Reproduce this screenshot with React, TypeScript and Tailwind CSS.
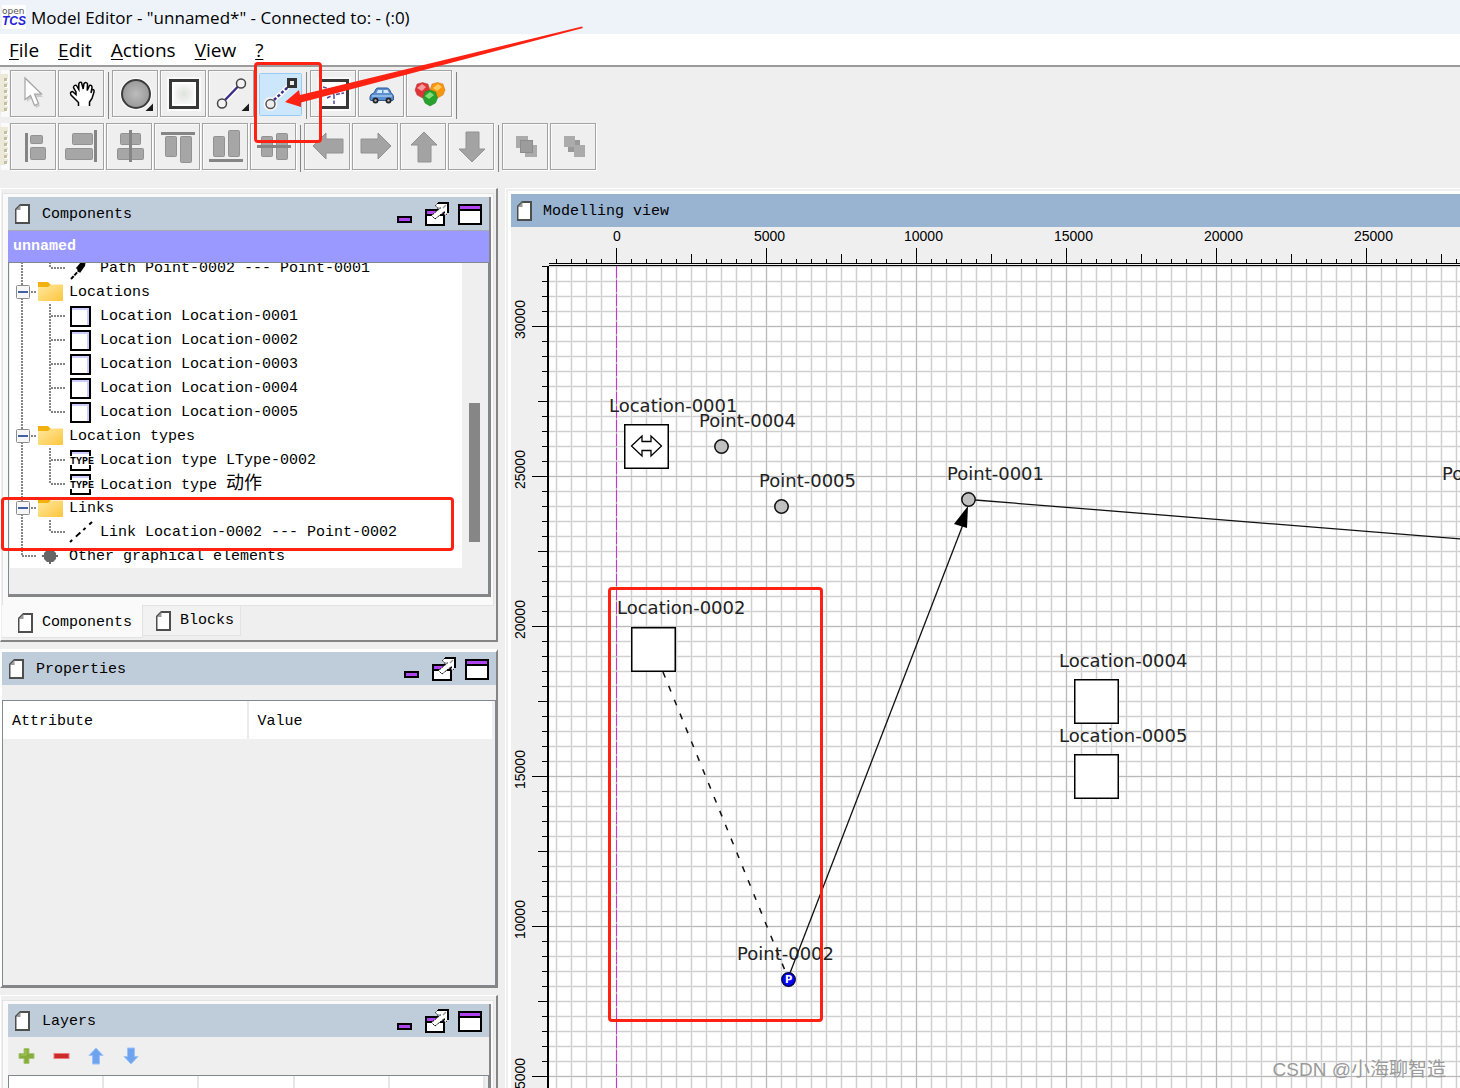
import React from 'react';

const RED = '#ff2213';

/* ---------- toolbar ---------- */

const ToolButton = ({ label, active, children }: { label: string; active?: boolean; children: React.ReactNode }) => (
  <button
    type="button"
    aria-label={label}
    className={
      active
        ? 'h-[47px] w-[46px] shrink-0'
        : 'h-[47px] w-[46px] shrink-0 border border-[#a3a3a3] bg-[#efefef] shadow-[1px_1px_0_#ffffff,inset_1px_1px_0_#fafafa]'
    }
  >
    <svg viewBox="0 0 46 47" width="46" height="47" className={active ? 'block' : '-m-px block'}>
      {children}
    </svg>
  </button>
);

const Grip = () => (
  <svg width="10" height="47" className="shrink-0">
    <rect x="1" y="0" width="8" height="47" fill="#fafafa" />
    <rect x="0" y="4" width="8" height="38" fill="#ece9d8" />
    {[8, 14, 20, 26, 32, 38].map((y) => (
      <g key={y}>
        <rect x="5" y={y + 1} width="3" height="3" fill="#fff" />
        <rect x="4" y={y} width="3" height="3" fill="#c4bfa4" />
      </g>
    ))}
  </svg>
);

const Separator = () => <div className="mr-px ml-0.5 h-[47px] w-px shrink-0 translate-y-0.5 bg-[#848484]" />;

const Corner = () => <path d="M41 33.5V41H33.5Z" fill="#1c1c1c" />;

// x, y, width, height of the grey blocks in each alignment icon
const alignIcons: { label: string; bars: number[][]; line: number[] }[] = [
  { label: 'Align left', line: [15, 10, 3, 29], bars: [[20, 12, 13, 9], [20, 24, 16, 13]] },
  { label: 'Align right', line: [36, 7, 3, 32], bars: [[14, 10, 21, 12], [7, 25, 28, 12]] },
  { label: 'Align horizontally', line: [23, 7, 3, 32], bars: [[14, 10, 21, 12], [11, 25, 27, 12]] },
  { label: 'Align top', line: [7, 9, 34, 3], bars: [[11, 13, 12, 21], [26, 13, 12, 27]] },
  { label: 'Align bottom', line: [7, 36, 34, 3], bars: [[11, 13, 12, 21], [26, 7, 12, 27]] },
  { label: 'Align vertically', line: [7, 22, 34, 3], bars: [[11, 13, 12, 21], [26, 10, 12, 27]] },
];

const moveIcons = [
  { label: 'Move west', points: '9,23 22,10 22,16 39,16 39,30 22,30 22,36' },
  { label: 'Move east', points: '39,23 26,10 26,16 9,16 9,30 26,30 26,36' },
  { label: 'Move north', points: '24,9 37,22 31,22 31,39 18,39 18,22 11,22' },
  { label: 'Move south', points: '24,39 37,26 31,26 31,9 18,9 18,26 11,26' },
];

const Toolbars = () => (
  <div className="flex flex-col gap-1.5 pt-[3px] pb-[18px]">
    <div role="toolbar" aria-label="Drawing tools" className="flex">
      <Grip />
      <div className="flex gap-0.5">
        <ToolButton label="Selection tool">
          <path d="M17 9V32L22 28L26 38L30 36L26 27L33 27Z" fill="#bdbdbd" opacity=".7" />
          <path d="M15 8V29.500L20.500 25.500L24.500 35.500L28.500 33.500L24.500 24H31.500Z" fill="#fff" stroke="#a4a4a4" strokeWidth="1.200" />
        </ToolButton>
        <ToolButton label="Drag tool">
          <path
            d="M20.500 36V32.500L16.500 28.500L13 25Q11.500 22 14.500 21.500L18 24.500V22L15.500 17.500Q16 14.500 18.500 15.500L20.800 19.500V14Q21.500 11.500 23.500 12.500L25.200 19L26 13.500Q28.500 11.500 29.500 14L29.200 20.500L31.500 15.500Q34 14.500 34 17.500L33 23L34 19.500Q36.500 19 36 22L34 28.500L31.500 32V36"
            fill="#fff"
            stroke="#000"
            strokeWidth="1.500"
          />
        </ToolButton>
        <Separator />
        <ToolButton label="Point tool">
          <defs>
            <radialGradient id="point">
              <stop offset="0" stopColor="#bcbcbc" />
              <stop offset="1" stopColor="#999" />
            </radialGradient>
          </defs>
          <circle cx="24" cy="24" r="16" fill="#fff" />
          <circle cx="24" cy="24" r="14" fill="url(#point)" stroke="#3c3c3c" strokeWidth="2" />
          <Corner />
        </ToolButton>
        <ToolButton label="Location tool">
          <defs>
            <radialGradient id="location">
              <stop offset="0" stopColor="#dfe3dc" />
              <stop offset="1" stopColor="#f6f6f6" />
            </radialGradient>
          </defs>
          <rect x="7" y="7" width="34" height="34" fill="#fafafa" />
          <rect x="10.500" y="10.500" width="27" height="27" fill="#fff" stroke="#383838" strokeWidth="3" />
          <rect x="14" y="14" width="20" height="20" fill="url(#location)" />
        </ToolButton>
        <ToolButton label="Path tool">
          <path d="M17 30L30 16.500" stroke="#fff" strokeWidth="5" />
          <path d="M17 30L30 16.500" stroke="#3c3089" strokeWidth="2.500" />
          <circle cx="33" cy="13.500" r="4.500" fill="#f3f3f3" stroke="#444" strokeWidth="1.500" />
          <circle cx="14" cy="33.500" r="4.500" fill="#f3f3f3" stroke="#444" strokeWidth="1.500" />
          <Corner />
        </ToolButton>
        <ToolButton label="Link tool" active>
          <rect x="3.500" y="3.500" width="42" height="42" rx="1" fill="#cce6fb" stroke="#94ccf7" />
          <circle cx="14.500" cy="34" r="7" fill="#f5f5f5" />
          <path d="M18 30L32 17" stroke="#fff" strokeWidth="5" />
          <path d="M18 30L32 17" stroke="#3c3089" strokeWidth="2.500" strokeDasharray="3 2" />
          <rect x="32.500" y="9.500" width="7" height="7" fill="#eee" stroke="#333" strokeWidth="3" />
          <circle cx="14.500" cy="34" r="4.500" fill="#eee" stroke="#555" strokeWidth="1.500" />
        </ToolButton>
        <Separator />
        <ToolButton label="Create group">
          <rect x="7" y="7" width="34" height="34" fill="#fafafa" />
          <rect x="10.500" y="10.500" width="27" height="27" fill="#fff" stroke="#383838" strokeWidth="3" />
          <path d="M13 17L20 19L24 25L34 23M24 25V34M20 19L29 17M17 28L21 26" fill="none" stroke="#5348a0" strokeWidth="1.500" strokeDasharray="4 1.500" />
        </ToolButton>
        <ToolButton label="Create vehicle">
          <path d="M12 27Q12 24 16 23L18 19Q18.500 18 20 18H29Q30.500 18 31.500 19.500L33 23Q35.500 24 35.500 27V29Q35.500 30.500 34 30.500H13Q12 30.500 12 29Z" fill="#5b8fd0" stroke="#2d5791" />
          <path d="M18.500 23L20 20H24V23ZM25.500 20H29.500L31 23H25.500Z" fill="#d5e8fa" />
          <path d="M14 26H34" stroke="#9cc4ee" strokeWidth="1.500" />
          <circle cx="17.500" cy="30.500" r="3" fill="#222" />
          <circle cx="30.500" cy="30.500" r="3" fill="#222" />
          <circle cx="17.500" cy="30.500" r="1.200" fill="#aaa" />
          <circle cx="30.500" cy="30.500" r="1.200" fill="#aaa" />
        </ToolButton>
        <ToolButton label="Create block">
          <path d="M9 20L11 14L16.500 12.500L22 14L24 20L22 25L16.500 28L11 25Z" fill="#dd3439" stroke="#b44" strokeWidth=".5" />
          <path d="M11 18L16 14L20 17L16 21Z" fill="#f79c9c" />
          <path d="M24 20L26 14L31.500 12.500L37 14L39 20L37 25L31.500 28L26 25Z" fill="#f5960c" stroke="#c73" strokeWidth=".5" />
          <path d="M27 18L32 14L36 17L31 21Z" fill="#ffc95c" />
          <path d="M17 28L19 22L24 20L29.500 22L31.500 28L29.500 33L24 36L19 33Z" fill="#27a22c" stroke="#17801a" strokeWidth=".5" />
          <path d="M19 26L24 22L28 25L23 29Z" fill="#86dd75" />
        </ToolButton>
        <Separator />
      </div>
    </div>

    <div role="toolbar" aria-label="Arrange tools" className="flex">
      <Grip />
      <div className="flex gap-0.5">
        {alignIcons.map(({ label, bars, line }) => (
          <ToolButton key={label} label={label}>
            {bars.map(([x, y, w, h]) => (
              <rect key={`${x}-${y}`} x={x + 0.5} y={y + 0.5} width={w - 1} height={h - 1} rx="1" fill="#a6a6a6" stroke="#929292" />
            ))}
            <rect x={line[0]} y={line[1]} width={line[2]} height={line[3]} fill="#858585" />
          </ToolButton>
        ))}
        <Separator />
        {moveIcons.map(({ label, points }) => (
          <ToolButton key={label} label={label}>
            <polygon points={points} fill="#a3a3a3" stroke="#929292" strokeLinejoin="round" />
          </ToolButton>
        ))}
        <Separator />
        <ToolButton label="Bring to front">
          <rect x="14" y="13" width="12" height="12" fill="#ababab" />
          <rect x="23" y="22" width="12" height="12" fill="#ababab" />
          <rect x="18.500" y="17.500" width="12" height="12" fill="#9c9c9c" stroke="#8c8c8c" />
        </ToolButton>
        <ToolButton label="Send to back">
          <rect x="18" y="17" width="12" height="12" fill="#999" />
          <rect x="14" y="13" width="11" height="11" fill="#ababab" />
          <rect x="24" y="22" width="11" height="12" fill="#ababab" />
        </ToolButton>
      </div>
    </div>
  </div>
);

/* ---------- docking panels ---------- */

const DocIcon = () => (
  <svg width="15" height="20" viewBox="0 0 15 20" className="shrink-0">
    <path d="M5 0H15V20H0V5Z" fill="#4d4f4c" />
    <path d="M5.500 2H13V18H1.500V6Z" fill="#fff" />
    <path d="M5.500 1V6H1Z" fill="#9a9a9a" />
  </svg>
);

const PanelTitle = ({ title }: { title: string }) => (
  <div className="flex h-[33px] shrink-0 items-center bg-[#bfcddb] pr-[7px] pl-[7px]">
    <DocIcon />
    <h2 className="ml-3 flex-1 pt-0.5">{title}</h2>
    <div className="flex gap-[9px]">
      <button type="button" aria-label={`Minimize ${title}`}>
        <svg width="24" height="24" className="block">
          <rect x="6" y="15" width="13" height="5" fill="#b044ee" stroke="#000" strokeWidth="2" />
        </svg>
      </button>
      <button type="button" aria-label={`Undock ${title}`}>
        <svg width="24" height="24" className="block">
          <rect x="1" y="8" width="18" height="15" fill="#fff" stroke="#000" strokeWidth="2" />
          <rect x="2" y="9" width="16" height="3" fill="#b044ee" />
          <path d="M2 13H18" stroke="#000" strokeWidth="2" />
          <path d="M13 1H23V11L21 14H19V10L10 17L6 14L15 6H11L10 4Z" fill="#fff" />
          <path d="M13 1H23V11" fill="none" stroke="#000" strokeWidth="2" />
          <path d="M13 1L10.500 3.500L12 6H15.500L6.500 13.500L10 17M10 17L19.500 9.500V14L22.500 11.500" fill="none" stroke="#000" strokeDasharray="2 1" />
          <path d="M18 6L21 3" stroke="#999" strokeWidth="1.500" />
        </svg>
      </button>
      <button type="button" aria-label={`Maximize ${title}`}>
        <svg width="24" height="24" className="block">
          <rect x="1" y="3" width="22" height="19" fill="#fff" stroke="#000" strokeWidth="2" />
          <rect x="2" y="4" width="20" height="3" fill="#b044ee" />
          <path d="M2 8H22" stroke="#000" strokeWidth="2" />
        </svg>
      </button>
    </div>
  </div>
);

type Kind = 'path' | 'folder' | 'location' | 'type' | 'link' | 'other';

interface TreeRow {
  kind: Kind;
  label: React.ReactNode;
  last?: boolean;
}

const rows: TreeRow[] = [
  { kind: 'path', label: 'Path Point-0002 --- Point-0001', last: true },
  { kind: 'folder', label: 'Locations' },
  { kind: 'location', label: 'Location Location-0001' },
  { kind: 'location', label: 'Location Location-0002' },
  { kind: 'location', label: 'Location Location-0003' },
  { kind: 'location', label: 'Location Location-0004' },
  { kind: 'location', label: 'Location Location-0005', last: true },
  { kind: 'folder', label: 'Location types' },
  { kind: 'type', label: 'Location type LType-0002' },
  { kind: 'type', label: <>Location type <span className="text-lg leading-none">动作</span></>, last: true },
  { kind: 'folder', label: 'Links' },
  { kind: 'link', label: 'Link Location-0002 --- Point-0002', last: true },
  { kind: 'other', label: 'Other graphical elements' },
];

const Dots = ({ d }: { d: string }) => <path d={d} stroke="#858585" strokeWidth="2" strokeDasharray="2 1" fill="none" />;

const TreeIcon = ({ kind }: { kind: Kind }) => {
  switch (kind) {
    case 'path':
      return (
        <>
          <path d="M61 23L72 11" stroke="#000" strokeWidth="2" strokeDasharray="4 1" />
          <path d="M66 12L71 6L76 4L75 10L70 17Z" fill="#000" />
        </>
      );
    case 'folder':
      return (
        <>
          <rect x="6.500" y="5.500" width="13" height="13" rx="1" fill="#f6f6f6" stroke="#8d8d8d" />
          <path d="M8 12H18" stroke="#4060a8" strokeWidth="2" />
          <path d="M28 2H38L41 5H53V12H28Z" fill="#f2b10c" />
          <path d="M28 7H38L41 4.500H53V20Q53 21 52 21H29Q28 21 28 20Z" fill="url(#folder)" />
        </>
      );
    case 'location':
      return (
        <>
          <rect x="61" y="3" width="19" height="19" fill="#fff" stroke="#000" strokeWidth="2" />
          <path d="M62 5H78V21" stroke="#ccccff" fill="none" strokeWidth="2" />
        </>
      );
    case 'type':
      return (
        <>
          <rect x="61" y="3" width="19" height="19" fill="#fff" stroke="#000" strokeWidth="2" />
          <path d="M62 5H79" stroke="#ccccff" strokeWidth="2" />
          <rect x="60" y="8" width="23" height="9" fill="#fff" />
          <text x="60" y="16" className="font-['Liberation_Mono',monospace] text-[10px] font-bold">TYPE</text>
        </>
      );
    case 'link':
      return <path d="M60 22L82 2" stroke="#000" strokeWidth="2" strokeDasharray="3 5 6 4" />;
    default:
      return <path d="M37 6H43L46 9V15L43 18H37L34 15V9ZM39 4H41V20H39ZM32 11H48V13H32Z" fill="#666" />;
  }
};

const ComponentTree = () => (
  <ul role="tree" aria-label="Model components" className="-mt-[7px] w-[452px] bg-white">
    {rows.map(({ kind, label, last }, i) => {
      const top = kind === 'folder' || kind === 'other';
      return (
        <li key={i} role="treeitem" className="flex h-6 items-center whitespace-nowrap">
          <svg width={top ? 59 : 90} height="24" className="shrink-0">
            <Dots d={kind === 'other' ? 'M12 0V12' : 'M12 0V24'} />
            {kind === 'other' && <Dots d="M12 12H27" />}
            {kind === 'folder' && <Dots d="M21 12H27" />}
            {!top && <Dots d={last ? 'M40 0V12' : 'M40 0V24'} />}
            {!top && <Dots d="M41 12H56" />}
            <TreeIcon kind={kind} />
          </svg>
          <span className="pt-0.5">{label}</span>
        </li>
      );
    })}
  </ul>
);

const ComponentsPanel = () => (
  <section className="shrink-0 border-t border-r-2 border-b-2 border-l border-t-white border-r-[#858585] border-b-[#858585] border-l-white pt-1 pr-0.5 pl-px">
    <div className="border border-[#e3e3e3] bg-[#fafafa] pt-[3px] pr-0.5 pb-2 pl-[5px]">
      <div className="border-r-2 border-b-2 border-[#858585]">
        <PanelTitle title="Components" />
        <div className="flex h-8 items-center border-t border-[#a9a9b4] bg-[#9999ff] pl-[5px] font-bold text-white">unnamed</div>
        <div className="flex h-[333px] border border-[#828790] bg-[#efefef] pl-px">
          <div className="flex-1 overflow-hidden">
            <svg width="0" height="0" className="absolute">
              <linearGradient id="folder" x1="0" y1="0" x2="1" y2="1">
                <stop offset="0" stopColor="#ffe9a2" />
                <stop offset="1" stopColor="#fcc53c" />
              </linearGradient>
            </svg>
            <ComponentTree />
          </div>
          <div className="w-[19px] pt-[140px]">
            <div className="h-[139px] w-[11px] bg-[#868686]" />
          </div>
        </div>
      </div>
    </div>
    <div role="tablist" className="-mt-px flex h-[35px] items-start">
      <button type="button" role="tab" aria-selected="true" className="flex h-[33px] w-[141px] items-center gap-[9px] border-r border-b border-[#e3e3e3] bg-[#fafafa] pt-1 pl-4">
        <DocIcon />
        Components
      </button>
      <button type="button" role="tab" aria-selected="false" className="flex h-[31px] w-[98px] items-center gap-[9px] border border-l-0 border-[#e3e3e3] bg-[#f2f2f2] pl-[13px]">
        <DocIcon />
        Blocks
      </button>
    </div>
  </section>
);

const PropertiesPanel = () => (
  <section className="flex min-h-0 flex-1 flex-col border-t-[3px] border-r-2 border-b-2 border-l-2 border-t-white border-r-[#858585] border-b-[#858585] border-l-white">
    <PanelTitle title="Properties" />
    <div className="mt-[15px] flex-1 border border-[#828790] pr-[3px]">
      <table className="w-full table-fixed border-collapse bg-white text-left">
        <thead>
          <tr className="h-[38px]">
            <th className="w-1/2 border-r-2 border-[#ebebeb] pt-1 pl-[9px] font-normal">Attribute</th>
            <th className="pt-1 pl-[9px] font-normal">Value</th>
          </tr>
        </thead>
      </table>
    </div>
  </section>
);

const LayersPanel = () => (
  <section className="h-[93px] shrink-0 overflow-hidden border-t border-r-2 border-l border-t-white border-r-[#858585] border-l-white pt-1 pr-0.5 pl-px">
    <div className="border border-[#e3e3e3] bg-[#fafafa] pt-[3px] pr-0.5 pl-[5px]">
      <div className="border-r-2 border-[#858585] bg-[#efefef]">
        <PanelTitle title="Layers" />
        <div className="flex h-[38px] items-center gap-[15px] pl-2">
          <button type="button" aria-label="Add layer">
            <svg width="20" height="20" className="block">
              <path d="M8 2.500H13V7.500H18V12.500H13V17.500H8V12.500H3V7.500H8Z" fill="#86ad3b" stroke="#a9c573" />
              <path d="M10 4V9H5" stroke="#a5cb5e" fill="none" />
            </svg>
          </button>
          <button type="button" aria-label="Remove layer">
            <svg width="20" height="20" className="block">
              <rect x="3" y="7.500" width="15" height="5" fill="#cf2a2a" stroke="#e48080" />
            </svg>
          </button>
          <button type="button" aria-label="Move layer up">
            <svg width="20" height="20" className="block">
              <path d="M10 2L17 9.500H13.500V18H6.500V9.500H3Z" fill="#6fa3f0" stroke="#9dc2f6" />
            </svg>
          </button>
          <button type="button" aria-label="Move layer down">
            <svg width="20" height="20" className="block">
              <path d="M10 18L17 10.500H13.500V2H6.500V10.500H3Z" fill="#6fa3f0" stroke="#9dc2f6" />
            </svg>
          </button>
        </div>
        <div className="flex h-10 border border-[#828790] pr-[3px]">
          {[0, 1, 2, 3, 4].map((i) => (
            <div key={i} className="flex-1 border-r-2 border-[#e6e6e6] bg-white" />
          ))}
        </div>
      </div>
    </div>
  </section>
);

/* ---------- modelling view ---------- */

const STEP = 15;
const range = (length: number) => Array.from({ length: Math.max(0, length) }, (_, i) => i);

// only as many ticks as the view has room for
const columnTicks = range(Math.ceil((window.innerWidth - 556) / STEP));
const rowTicks = range(Math.ceil((window.innerHeight - 266) / STEP));

const HorizontalRuler = () => (
  <svg className="block h-full w-full font-['Liberation_Sans',sans-serif] text-sm">
    {columnTicks.map((i) => {
      const x = 7 + i * STEP;
      const n = i - 4; // the origin is the fifth tick
      const major = n % 10 === 0;
      const len = major ? 15 : n > 0 && n % 5 === 0 ? 9 : 4;
      return (
        <g key={i}>
          <rect x={x} y={36 - len} width="1" height={len} />
          {major && (
            <text x={n === 0 ? x - 3 : x - 12} y="14">
              {n * 500}
            </text>
          )}
        </g>
      );
    })}
    <rect x="0" y="36" width="100%" height="1" />
    <rect x="0" y="38" width="100%" height="1" />
  </svg>
);

const VerticalRuler = () => (
  <svg className="block h-full w-full font-['Liberation_Sans',sans-serif] text-sm">
    {rowTicks.map((i) => {
      const y = i * STEP;
      const n = i - 4;
      const major = n >= 0 && n % 10 === 0;
      const len = major ? 15 : n > 0 && n % 5 === 0 ? 9 : 5;
      return (
        <g key={i}>
          <rect x={36 - len} y={y} width={len} height="1" />
          {major && <text transform={`translate(14 ${y + 13}) rotate(-90)`}>{30000 - n * 500}</text>}
        </g>
      );
    })}
    <rect x="36" y="0" width="2" height="100%" />
  </svg>
);

const locations = [
  { name: 'Location-0001', x: 75, y: 158, lx: 60, ly: 146 },
  { name: 'Location-0002', x: 82, y: 361, lx: 68, ly: 348 },
  { name: 'Location-0004', x: 525, y: 413, lx: 510, ly: 401 },
  { name: 'Location-0005', x: 525, y: 488, lx: 510, ly: 476 },
];

const points = [
  { name: 'Point-0004', x: 172, y: 180, lx: 150, ly: 161 },
  { name: 'Point-0005', x: 232, y: 240, lx: 210, ly: 221 },
  { name: 'Point-0001', x: 419, y: 233, lx: 398, ly: 214 },
  { name: 'Point-0003', x: 930, y: 273, lx: 893, ly: 214 },
  { name: 'Point-0002', x: 239, y: 713, lx: 188, ly: 694, parking: true },
];

const Drawing = () => (
  <svg className="block h-full w-full bg-white font-['DejaVu_Sans',sans-serif] text-lg">
    <defs>
      <pattern id="minor" x="7" y="0" width="15" height="15" patternUnits="userSpaceOnUse">
        <path d="M1.500 0V15M14.500 0V15M0 1.500H15M0 14.500H15" stroke="#f3f3f3" />
        <path d="M.5 0V15M0 .5H15" stroke="#d0d0d0" />
      </pattern>
      <pattern id="major" x="67" y="60" width="150" height="150" patternUnits="userSpaceOnUse">
        <path d="M.5 0V150M0 .5H150" stroke="#b9b9b9" />
      </pattern>
    </defs>
    <rect width="100%" height="100%" fill="url(#minor)" />
    <rect width="100%" height="100%" fill="url(#major)" />
    <path d="M67.500 0V2000" stroke="#cc33cc" strokeDasharray="12 2" />

    <path d="M114 406L237 707" stroke="#111" strokeWidth="1.500" strokeDasharray="6 9" />
    <path d="M241 707L415 256" stroke="#111" strokeWidth="1.300" />
    <path d="M419 240L405 258L418 262Z" />
    <path d="M426 234L925 274" stroke="#111" strokeWidth="1.300" />

    {locations.map(({ name, x, y, lx, ly }) => (
      <g key={name}>
        <rect x={x + 0.75} y={y + 0.75} width="43.500" height="43.500" fill="#fff" stroke="#000" strokeWidth="1.500" />
        <text x={lx} y={ly} fill="#222">{name}</text>
      </g>
    ))}
    <path
      d="M82.500 180L93 170V175.500H102V170L112.500 180L102 190V184.500H93V190Z"
      fill="#fff"
      stroke="#000"
      strokeWidth="1.300"
    />

    {points.map(({ name, x, y, lx, ly, parking }) => (
      <g key={name}>
        <circle cx={x + 0.5} cy={y + 0.5} r="6.700" fill={parking ? '#0000ff' : '#c0c0c0'} stroke={parking ? '#00004d' : '#111'} strokeWidth="1.500" />
        {parking && <text x={x - 3} y={y + 4} fill="#fff" className="text-[10px] font-bold">P</text>}
        <text x={lx} y={ly} fill="#222">{name}</text>
      </g>
    ))}
  </svg>
);

const ModellingView = () => (
  <section className="flex min-w-0 flex-1 flex-col border-t border-l border-white pt-0.5 pl-0.5">
    <div className="flex min-h-0 flex-1 flex-col border-t-[3px] border-l-[3px] border-white">
      <div className="flex h-[33px] shrink-0 items-center gap-[11px] bg-[#99b4d1] pl-1.5">
        <DocIcon />
        <h2 className="pt-0.5">Modelling view</h2>
      </div>
      <div className="grid min-h-0 flex-1 grid-cols-[38px_minmax(0,1fr)] grid-rows-[39px_minmax(0,1fr)] bg-[#efefef]">
        <div />
        <HorizontalRuler />
        <VerticalRuler />
        <Drawing />
      </div>
    </div>
  </section>
);

/* ---------- markup drawn over the window ---------- */

const Annotations = () => (
  <div className="pointer-events-none absolute inset-0">
    <div className="absolute top-[62px] left-[254px] h-[81px] w-[68px] rounded-[4px] border-[3px] border-[#ff2213]" />
    <div className="absolute top-[497px] left-px h-[54px] w-[453px] rounded-[4px] border-[3px] border-[#ff2213]" />
    <div className="absolute top-[587px] left-[608px] h-[435px] w-[215px] rounded-[4px] border-[3px] border-[#ff2213]" />
    <svg width="600" height="120" className="absolute top-0 left-0">
      <path d="M285 102L299 90L300 95L582 26.500L583 28L301 102.500L301 107Z" fill={RED} />
    </svg>
    <span className="absolute right-[14px] bottom-1 text-[19px] leading-7 text-[#9a9a9a] font-['Liberation_Sans','Noto_Sans_CJK_SC',sans-serif]">
      CSDN @小海聊智造
    </span>
  </div>
);

const menus = ['File', 'Edit', 'Actions', 'View', '?'];

export default function App() {
  return (
    <div className="relative flex h-screen flex-col overflow-hidden bg-[#efefef] text-[15px] leading-5 text-black font-['Liberation_Mono','Noto_Sans_CJK_SC',monospace]">
      <header className="flex h-[34px] shrink-0 items-center gap-[5px] bg-[#eef3fa] pl-0.5 font-['Open_Sans',sans-serif]">
        <svg width="24" height="24" viewBox="0 0 24 24">
          <rect width="24" height="24" fill="#fff" />
          <text x="0" y="9" fill="#555" className="font-['DejaVu_Sans',sans-serif] text-[9px]">open</text>
          <text x="0" y="20" fill="#2222dd" className="font-['Liberation_Sans',sans-serif] text-[12px] font-bold italic">TCS</text>
        </svg>
        <h1 className="pt-0.5 text-[17px]">Model Editor - "unnamed*" - Connected to: - (:0)</h1>
      </header>
      <nav className="flex h-[33px] shrink-0 items-center gap-[19px] border-b-2 border-[#9b9b9b] bg-white pl-[9px] text-[19px] font-['Open_Sans',sans-serif]">
        {menus.map((menu) => (
          <button key={menu} type="button">
            <span className="underline decoration-1 underline-offset-2">{menu[0]}</span>
            {menu.slice(1)}
          </button>
        ))}
      </nav>
      <Toolbars />
      <main className="flex min-h-0 flex-1 gap-[7px]">
        <div className="flex w-[498px] shrink-0 flex-col gap-[7px]">
          <ComponentsPanel />
          <PropertiesPanel />
          <LayersPanel />
        </div>
        <ModellingView />
      </main>
      <Annotations />
    </div>
  );
}
